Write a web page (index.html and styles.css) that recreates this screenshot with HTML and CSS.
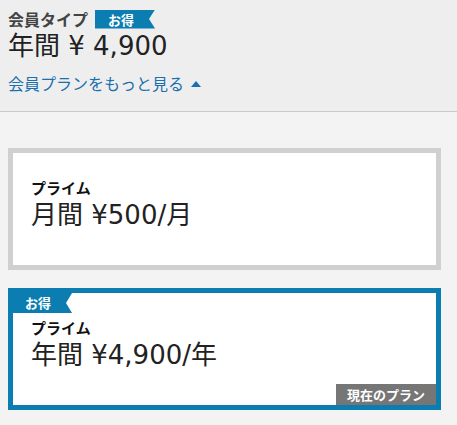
FILE: index.html
```html
<!DOCTYPE html>
<html lang="ja">
<head>
<meta charset="utf-8">
<link rel="stylesheet" href="styles.css">
</head>
<body>
<header class="summary">
  <div class="type-row">
    <span class="type-label">会員タイプ</span>
    <span class="ribbon">お得</span>
  </div>
  <div class="current-price">年間 ¥ 4,900</div>
  <a class="more-link" href="#">会員プランをもっと見る <span class="caret"></span></a>
</header>
<main class="plans">
  <div class="plan">
    <div class="plan-name">プライム</div>
    <div class="plan-price">月間 ¥500/月</div>
  </div>
  <div class="plan plan-selected">
    <span class="ribbon ribbon-card">お得</span>
    <div class="plan-name">プライム</div>
    <div class="plan-price">年間 ¥4,900/年</div>
    <span class="current-tag">現在のプラン</span>
  </div>
</main>
</body>
</html>
```
FILE: styles.css
```css
html, body {
  margin: 0;
  padding: 0;
}
body {
  background: #f3f3f3;
  font-family: "Noto Sans CJK JP", "Noto Sans", sans-serif;
  color: #222;
  width: 457px;
  height: 425px;
  overflow: hidden;
}
.summary {
  background: #eeeeee;
  height: 112px;
  box-sizing: border-box;
  padding: 8px 8px 0 8px;
  border-bottom: 1px solid #c9c9c9;
}
.type-row {
  display: flex;
  align-items: center;
  gap: 7px;
  height: 22px;
}
.type-label {
  font-size: 16px;
  font-weight: bold;
  color: #444;
  line-height: 22px;
}
.ribbon {
  display: inline-block;
  background: #0b7db1;
  color: #fff;
  font-size: 13px;
  font-weight: bold;
  line-height: 19px;
  height: 19px;
  padding: 0 21px 0 13px;
  clip-path: polygon(0 0, 100% 0, calc(100% - 6px) 50%, 100% 100%, 0 100%);
}
.current-price {
  font-family: "DejaVu Sans", "Noto Sans CJK JP", sans-serif;
  font-size: 26px;
  line-height: 30px;
  margin-top: 1px;
  color: #222;
}
.more-link {
  display: inline-flex;
  align-items: center;
  gap: 7px;
  margin-top: 12px;
  font-size: 16px;
  line-height: 20px;
  color: #1a6fae;
  text-decoration: none;
}
.caret {
  width: 0;
  height: 0;
  border-left: 5px solid transparent;
  border-right: 5px solid transparent;
  border-bottom: 6px solid #1a6fae;
  margin-top: 1px;
}
.plans {
  display: flex;
  flex-direction: column;
  gap: 18px;
  padding: 36px 16px 0 8px;
}
.plan {
  position: relative;
  background: #fff;
  border: 5px solid #d0d0d0;
  height: 122px;
  box-sizing: border-box;
  padding: 26px 18px 0 18px;
}
.plan-selected {
  border-color: #0b7db1;
}
.plan-name {
  font-size: 15px;
  font-weight: bold;
  line-height: 18px;
  color: #111;
}
.plan-price {
  font-family: "DejaVu Sans", "Noto Sans CJK JP", sans-serif;
  font-size: 26px;
  line-height: 30px;
  margin-top: 3px;
  color: #222;
}
.ribbon-card {
  position: absolute;
  left: 0;
  top: 0;
  height: 20px;
  line-height: 20px;
  padding: 0 21px 0 12px;
}
.current-tag {
  position: absolute;
  right: 0;
  bottom: 0;
  background: #767676;
  color: #fff;
  font-size: 13px;
  font-weight: bold;
  line-height: 21px;
  height: 21px;
  width: 100px;
  text-align: center;
}
```
